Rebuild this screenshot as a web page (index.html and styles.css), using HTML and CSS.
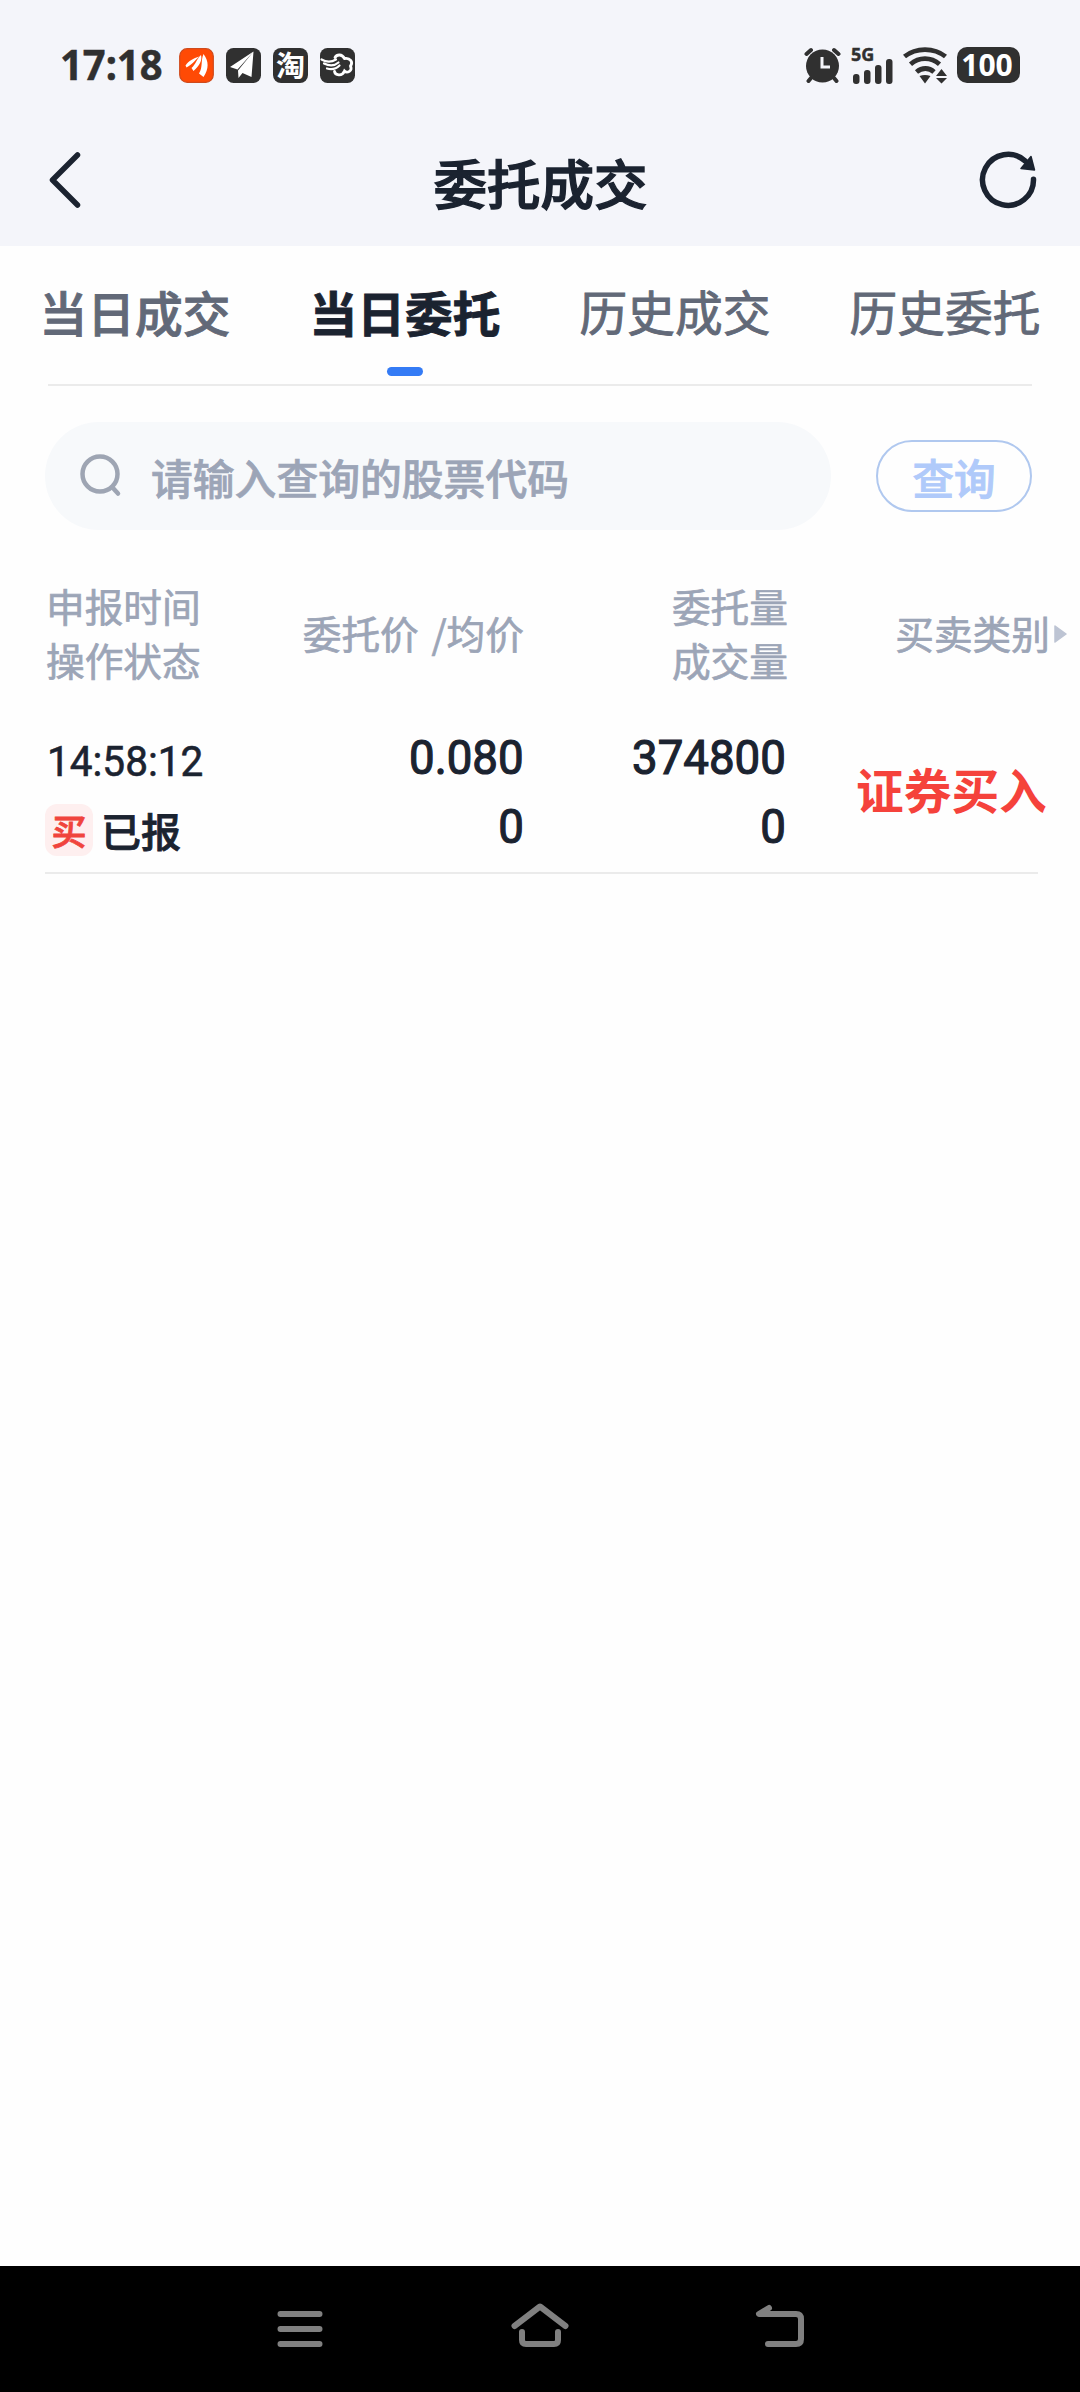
FILE: index.html
```html
<!DOCTYPE html>
<html lang="zh-CN">
<head>
<meta charset="utf-8">
<title>委托成交</title>
<link rel="stylesheet" href="styles.css">
</head>
<body>
<div class="screen">
  <div class="statusbar">
    <span class="clock">17:18</span>
    <div class="apps">
      <svg width="35" height="35" viewBox="0 0 35 35"><rect x=".7" y=".7" width="33.6" height="33.6" rx="7.5" fill="#ff4a05" stroke="#cf4a1c" stroke-width="1.2"/><g fill="#fff"><path d="M6.500 17.500C10 12.500 14 10.500 20.500 8.500C17 11 14.500 15.500 7.500 19.500Z"/><path d="M12.500 20C17 16 17.500 11 22 7C23.500 12 20.500 18 14.500 23Z"/><path d="M20 25.500C24 19 21.500 13 24.500 6C30 13 30 21 24.500 29Z"/></g></svg>
      <svg width="35" height="35" viewBox="0 0 35 35"><rect width="35" height="35" rx="7.500" fill="#303030"/><path d="M27.500 3.500L4 19L11.500 21.500ZM27.500 3.500L12 22.500L12.500 30L16.500 25L25.500 29Z" fill="#fff"/></svg>
      <span class="tao">淘</span>
      <svg width="35" height="35" viewBox="0 0 35 35"><rect width="35" height="35" rx="7.500" fill="#303030"/><g fill="none" stroke="#fff" stroke-linecap="round"><path d="M15 9.500C17 6 22 6 24.500 10.500C30 9.500 33.500 14 30.500 18C33 23 27 25.500 24.500 23C22 29 15 27 14.500 23.500" stroke-width="2.800"/><path d="M1.500 11.500C7 14.500 11 14.500 16 11.500M4 15.500C9 18 14 18.500 18.500 14.500M7 20.500C12 22 16 21 19.500 17.500" stroke-width="2.200"/></g></svg>
    </div>
    <div class="system">
      <svg width="37" height="37" viewBox="0 0 37 37"><g fill="none" stroke="#303030" stroke-width="4" stroke-linecap="round"><path d="M2.500 7L7 3M34.500 7L30 3M7 31L4.500 34M30 31L32.500 34"/></g><circle cx="18.500" cy="19" r="16.500" fill="#303030"/><path d="M18 10V20H26" fill="none" stroke="#f4f5fa" stroke-width="3"/></svg>
      <div class="cell"><span class="gen">5G</span>
        <svg width="43" height="25" viewBox="0 0 43 25" fill="#303030"><rect x="2" y="15" width="6.500" height="10" rx="3"/><rect x="13" y="11" width="6.500" height="14" rx="3"/><rect x="24" y="6" width="6.500" height="19" rx="3"/><rect x="35" y="0" width="6.500" height="25" rx="3"/></svg>
      </div>
      <svg class="wifi" width="45" height="37" viewBox="0 0 45 37"><g fill="none" stroke="#303030" stroke-width="4.800"><path d="M1.500 9.500C13 .2 31 .2 42.500 9.500M7.500 17.200C16 9.800 28 9.800 36.500 17.200M13.500 25C19 20.300 26 20.300 31 25"/></g><path d="M16.500 29Q22 27 27.500 29L22 36.500ZM33 29L38.500 22L44 29ZM33 31H44L38.500 36.500Z" fill="#303030"/></svg>
      <span class="battery">100</span>
    </div>
  </div>

  <header class="header">
    <svg width="36" height="60" viewBox="0 0 36 60"><path d="M30.500 5L5.500 30L30.500 55" fill="none" stroke="#1b2330" stroke-width="5.500" stroke-linecap="round" stroke-linejoin="round"/></svg>
    <h1>委托成交</h1>
    <svg width="60" height="60" viewBox="0 0 60 60"><path d="M55.500 29.300A25.500 25.500 0 1 1 47.200 11" fill="none" stroke="#1b2330" stroke-width="5.500" stroke-linecap="round"/><path d="M53 6.500L56.500 20L43 18.500Z" fill="#1b2330" stroke="#1b2330" stroke-width="1.500" stroke-linejoin="round"/></svg>
  </header>

  <nav class="tabs">
    <span class="tab semi">当日成交</span>
    <span class="tab active">当日委托</span>
    <span class="tab">历史成交</span>
    <span class="tab">历史委托</span>
  </nav>

  <div class="search">
    <div class="field">
      <svg width="42" height="44" viewBox="0 0 42 44"><circle cx="20" cy="20" r="17.500" fill="none" stroke="#9ea5b3" stroke-width="4.500"/><path d="M32.500 33.500L38 39.500" stroke="#9ea5b3" stroke-width="4.500" stroke-linecap="round"/></svg>
      <span>请输入查询的股票代码</span>
    </div>
    <button class="query">查询</button>
  </div>

  <div class="row thead">
    <div class="c1">申报时间<br>操作状态</div>
    <div class="c2">委托价 /均价</div>
    <div class="c3">委托量<br>成交量</div>
    <div class="c4"><span>买卖类别</span><svg width="13" height="18" viewBox="0 0 13 18"><path d="M1 1L12 9L1 17Z" fill="#bdc4d3" stroke="#bdc4d3" stroke-width="1.500" stroke-linejoin="round"/></svg></div>
  </div>

  <div class="row order">
    <div class="c1">
      <span class="time">14:58:12</span>
      <div class="state"><span class="badge">买</span><span>已报</span></div>
    </div>
    <div class="c2 nums"><span>0.080</span><span>0</span></div>
    <div class="c3 nums"><span>374800</span><span>0</span></div>
    <div class="c4 kind">证券买入</div>
  </div>

  <footer class="navbar">
    <svg width="60" height="60" viewBox="0 0 60 60"><path d="M10.500 18H49.500M10.500 33H49.500M10.500 48H49.500"/></svg>
    <svg width="60" height="60" viewBox="0 0 60 60"><path d="M4.500 30L30 10.500L55.500 30M12 36V44Q12 48 16 48H44Q48 48 48 44V36"/></svg>
    <svg width="60" height="60" viewBox="0 0 60 60"><path d="M19 12L9 18H46Q51 18 51 23V43Q51 48 46 48H18"/></svg>
  </footer>
</div>
</body>
</html>
```
FILE: styles.css
```css
* { box-sizing: border-box; }
body {
  margin: 0;
  background: #fefefe;
  font-family: "Noto Sans CJK SC", sans-serif;
  color: #1b2330;
}
.screen { width: 1080px; height: 2392px; display: flex; flex-direction: column; }

.statusbar {
  height: 118px;
  padding: 12px 60px 0 60px;
  display: flex;
  align-items: center;
  background: #f4f5fa;
  color: #303030;
}
.clock {
  width: 119px;
  font: 700 42px/50px "Noto Sans", sans-serif;
  white-space: nowrap;
  transform: scaleX(.95) translateY(-1px);
  transform-origin: left;
  -webkit-text-stroke: .5px;
}
.apps { display: flex; gap: 12px; }
.tao {
  width: 35px; height: 35px;
  border-radius: 8px;
  background: #303030;
  color: #fff;
  font-weight: 700; font-size: 29px; line-height: 33px;
  text-align: center;
}
.system { display: flex; align-items: center; margin-left: auto; }
.cell { width: 43px; height: 37px; margin: 0 9px 0 10px; display: flex; flex-direction: column; }
.gen { font: 700 18px/14px "Noto Sans", sans-serif; height: 12px; -webkit-text-stroke: .4px; }
.wifi { margin-right: 9px; }
.battery {
  width: 63px; height: 36px;
  padding-right: 3px;
  border-radius: 10px;
  background: #303030;
  color: #fff;
  font: 700 30px/36px "Noto Sans", sans-serif;
  text-align: center;
}

.header {
  height: 128px;
  padding: 0 42px 4px 47px;
  display: grid;
  grid-template-columns: 60px 1fr 60px;
  align-items: center;
  background: #f4f5fa;
}
.header h1 {
  margin: 0;
  padding: 4px 4px 0 0;
  font-size: 53.500px; line-height: 60px; font-weight: 500;
  text-align: center;
  -webkit-text-stroke: 1.4px;
}

.tabs {
  height: 140px;
  display: grid;
  grid-template-columns: repeat(4, 270px);
  background: linear-gradient(#ebebeb, #ebebeb) 48px 138px / 984px 2px no-repeat;
}
.tab {
  height: 130px;
  padding-top: 35px;
  font-size: 47.700px; line-height: 60px;
  text-align: center;
  color: #626978;
  -webkit-text-stroke: .9px;
}
.semi { padding-top: 36px; font-weight: 500; }
.active { padding-top: 36px; font-weight: 700; color: #1b2330; }
.active::after {
  content: "";
  display: block;
  width: 36px; height: 9px;
  margin: 25px auto 0;
  border-radius: 5px;
  background: #347bf5;
}

.search { display: flex; align-items: center; gap: 45px; padding: 36px 48px 0 45px; }
.field {
  width: 786px; height: 108px;
  padding-left: 35px;
  border-radius: 54px;
  background: #f7f9fb;
  display: flex;
  align-items: center;
  gap: 29px;
  color: #9ca5b7;
  font-size: 41.800px;
  font-weight: 500;
  -webkit-text-stroke: .7px;
}
.field span { padding-top: 1px; }
.query {
  width: 156px; height: 72px;
  padding: 2px 0 0;
  border: 2px solid #b0c8ef;
  border-radius: 36px;
  background: transparent;
  font: 500 41.500px/60px "Noto Sans CJK SC", sans-serif;
  color: #b0cafa;
  -webkit-text-stroke: .9px;
}

.row { display: grid; grid-template-columns: 215px 264px 264px 292px; margin-left: 45px; }
.thead {
  height: 150px;
  margin-top: 30px;
  padding-bottom: 7px;
  align-items: center;
  font-size: 38.700px; line-height: 54px;
  color: #9ca5b7;
  -webkit-text-stroke: .7px;
}
.thead .c1 { padding-left: 1px; }
.thead .c2 { word-spacing: 4px; }
.thead .c2, .thead .c3 { text-align: right; white-space: nowrap; }
.thead .c4 { display: flex; align-items: center; justify-content: flex-end; gap: 4px; padding-right: 13px; }
.thead svg { margin-top: 5px; }

.order {
  width: 993px;
  height: 164px;
  grid-template-columns: 215px 264px 262px 252px;
  border-bottom: 2px solid #ebebeb;
}
.time {
  display: block;
  font: 400 42px/50px Roboto, sans-serif;
  height: 50px;
  margin: 27px 0 17px 2px;
  transform: scaleX(.965);
  transform-origin: left;
  -webkit-text-stroke: .6px;
}
.state { display: flex; align-items: flex-start; gap: 8px; font-size: 40px; line-height: 52px; font-weight: 500; white-space: nowrap; -webkit-text-stroke: .8px; }
.badge {
  width: 48px; height: 52px;
  border-radius: 12px;
  background: #feefef;
  color: #f0443d;
  font-size: 35px; line-height: 52px;
  text-align: center;
}
.nums {
  display: flex; flex-direction: column; align-items: flex-end;
  padding: 13px 0 0;
  font: 400 48px/69px Roboto, sans-serif;
  -webkit-text-stroke: 1.2px;
}
.nums span { transform: scaleX(.95); transform-origin: right; }
.kind { font-size: 47.700px; line-height: 60px; font-weight: 700; color: #f5423b; padding: 49px 0 0 70px; white-space: nowrap; }

.navbar {
  height: 126px;
  margin-top: auto;
  background: #000;
  display: flex;
  justify-content: center;
  gap: 180px;
  padding-top: 30px;
}
.navbar svg { fill: none; stroke: #808080; stroke-width: 6; stroke-linecap: round; stroke-linejoin: round; }
```
